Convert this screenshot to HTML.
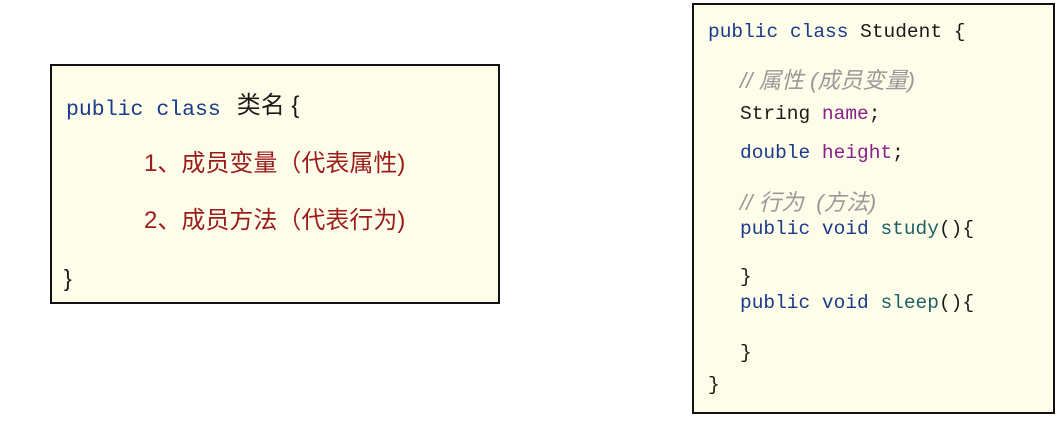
<!DOCTYPE html>
<html><head><meta charset="utf-8"><style>
body{margin:0;width:1063px;height:423px;background:#fff;position:relative;overflow:hidden}
.box{position:absolute;background:#fefde9;border:2px solid #111;box-sizing:border-box}
.t{position:absolute;white-space:pre;line-height:1;font-family:"Liberation Mono","Noto Sans CJK SC",monospace}
.kw{color:#1b3a8c}.pl{color:#1a1a1a}.fld{color:#8a1f8a}.fn{color:#1f5f66}
.cm{color:#999;font-style:italic;font-family:"Liberation Sans","Noto Sans CJK SC",sans-serif}
.red{color:#9b1c1c;font-family:"Liberation Sans","Noto Sans CJK SC",sans-serif}
</style></head><body>
<div class="box" style="left:50px;top:64px;width:450px;height:240px"></div>
<div class="t" style="left:66px;top:96px;font-size:21.5px"><span class="kw">public class </span><span class="pl" style="font-family:'Liberation Sans','Noto Sans CJK SC',sans-serif;font-size:24px;position:relative;top:-2px;left:3px">类名 {</span></div>
<div class="t red" style="left:144px;top:152px;font-size:24px">1、成员变量（代表属性)</div>
<div class="t red" style="left:144px;top:209px;font-size:24px">2、成员方法（代表行为)</div>
<div class="t pl" style="left:64px;top:267px;font-size:23px;font-family:'Liberation Sans',sans-serif">}</div>

<div class="box" style="left:692px;top:3px;width:363px;height:411px"></div>
<div style="font-size:19.5px">
<div class="t" style="left:708px;top:23px"><span class="kw">public class </span><span class="pl">Student {</span></div>
<div class="t cm" style="left:740px;top:70px;font-size:22.5px">// 属性 (成员变量)</div>
<div class="t" style="left:740px;top:105px"><span class="pl">String </span><span class="fld">name</span><span class="pl">;</span></div>
<div class="t" style="left:740px;top:144px"><span class="kw">double </span><span class="fld">height</span><span class="pl">;</span></div>
<div class="t cm" style="left:740px;top:192px;font-size:22.5px">// 行为  (方法)</div>
<div class="t" style="left:740px;top:220px"><span class="kw">public void </span><span class="fn">study</span><span class="pl">(){</span></div>
<div class="t pl" style="left:740px;top:268px">}</div>
<div class="t" style="left:740px;top:294px"><span class="kw">public void </span><span class="fn">sleep</span><span class="pl">(){</span></div>
<div class="t pl" style="left:740px;top:344px">}</div>
<div class="t pl" style="left:708px;top:376px">}</div>
</div>
</body></html>
